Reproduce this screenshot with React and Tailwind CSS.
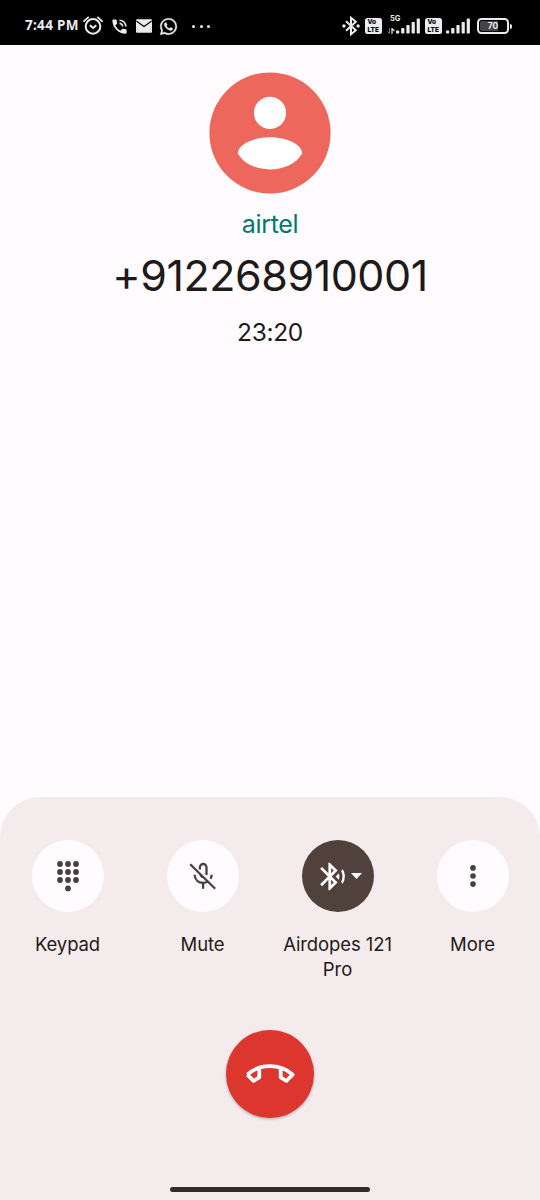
import React from 'react';
import { FaWhatsapp } from 'react-icons/fa';
import { MdBluetoothSearching, MdPhoneInTalk } from 'react-icons/md';

function AlarmIcon() {
    return (
        <svg width="20" height="20" viewBox="0 0 20 20" fill="none" stroke="#ececec" strokeWidth="2" className="ml-[3px]">
            <circle cx="10" cy="10.4" r="7.3" />
            <path d="M1 5.2 5.2 1.4M19 5.2 14.8 1.4" strokeLinecap="round" strokeWidth="1.8" />
            <path d="m6.8 9.2 3.3 2.7 3.2-2.7" strokeWidth="2" />
        </svg>
    );
}

function MailIcon() {
    return (
        <svg width="16" height="14" viewBox="0 0 16 14" className="ml-[7px]">
            <rect x="0" y="0.3" width="16" height="13.4" rx="1" fill="#ececec" />
            <path d="M0.3 2 8 7.6 15.7 2" fill="none" stroke="#000" strokeWidth="1.2" />
        </svg>
    );
}

function BluetoothIcon() {
    return (
        <svg width="18" height="20" viewBox="0 0 18 20" fill="none" stroke="#ececec" strokeWidth="2">
            <path d="m4 5.2 9.8 9L9 18.2V1.8l4.8 4-9.8 9" />
            <circle cx="1.9" cy="10" r="1.7" fill="#ececec" stroke="none" />
            <circle cx="16.1" cy="10" r="1.7" fill="#ececec" stroke="none" />
        </svg>
    );
}

function VoLte() {
    return (
        <div className="h-[16px] w-[17px] rounded-[2.5px] bg-[#ececec] pl-[2.5px] text-[6.5px] leading-[8px] font-extrabold text-black">
            <div>Vo</div>
            <div className="h-[8px]">LTE</div>
        </div>
    );
}

function Signal() {
    return (
        <svg width="24" height="16" viewBox="0 0 24 16" fill="#ececec">
            <rect x="0" y="12.6" width="3.2" height="3" rx="0.8" />
            <rect x="5.2" y="10" width="3.2" height="5.6" rx="0.8" />
            <rect x="10.4" y="7" width="3.2" height="8.6" rx="0.8" />
            <rect x="15.6" y="4" width="3.2" height="11.6" rx="0.8" />
            <rect x="20.7" y="0.6" width="3.2" height="15" rx="0.8" />
        </svg>
    );
}

function StatusBar() {
    return (
        <header className="flex h-[45px] items-center bg-black pt-[7px] pl-[25px] text-[#ececec]">
            <span className="w-[55px] font-['Noto_Sans'] text-[13.5px] leading-none font-bold tracking-[0.3px] whitespace-nowrap">7:44 PM</span>
            <AlarmIcon />
            <MdPhoneInTalk className="ml-[7px] h-[19px] w-[19px]" />
            <MailIcon />
            <FaWhatsapp className="ml-[7px] h-[19px] w-[19px]" stroke="#ececec" strokeWidth="12" />
            <div className="ml-[14px] flex gap-[4.5px]">
                <i className="h-[3px] w-[3px] rounded-full bg-[#ececec]"></i>
                <i className="h-[3px] w-[3px] rounded-full bg-[#ececec]"></i>
                <i className="h-[3px] w-[3px] rounded-full bg-[#ececec]"></i>
            </div>
            <div className="mr-[28px] ml-auto flex items-center">
                <BluetoothIcon />
                <div className="ml-[5px]"><VoLte /></div>
                <div className="relative ml-[14px]">
                    <span className="absolute top-[-3px] left-[-6px] text-[7.5px] leading-none font-bold">5G</span>
                    <svg width="8" height="6" viewBox="0 0 8 6" className="absolute bottom-0 left-[-9px]" fill="none" stroke="#ececec">
                        <path d="M2.5 0v5.5L0.5 3.5" stroke="#777" />
                        <path d="M5 6V0.6l2.4 2.4" strokeWidth="1.2" />
                    </svg>
                    <Signal />
                </div>
                <div className="ml-[5px]"><VoLte /></div>
                <div className="ml-[4px]"><Signal /></div>
                <div className="ml-[7px] flex h-[16px] w-[32px] items-center rounded-[4.5px] border-2 border-[#ececec] p-[1px]">
                    <div className="flex h-full w-[26px] items-center justify-center rounded-[2px] bg-linear-to-r from-[#444] from-70% to-black to-70% text-[8.5px] font-bold">70</div>
                </div>
                <div className="ml-px h-[5px] w-[2px] rounded-r-full bg-[#ececec]"></div>
            </div>
        </header>
    );
}

function KeypadIcon() {
    const dots = [[4, 4], [12, 4], [20, 4], [4, 12], [12, 12], [20, 12], [4, 20], [12, 20], [20, 20], [12, 28.4]];
    return (
        <svg width="24" height="32" viewBox="0 0 24 32" fill="#4b403e">
            {dots.map(([x, y]) => <circle key={`${x}-${y}`} cx={x} cy={y} r="2.9" />)}
        </svg>
    );
}

function MuteIcon() {
    return (
        <svg width="28" height="28" viewBox="0 0 28 28" fill="none" stroke="#4b403e" strokeWidth="2.3">
            <path d="m1.2 2.2 25 24.6" />
            <path d="M10.900 7.500V5.300a3.300 3.300 0 0 1 6.600 0v7.700" />
            <path d="M5.600 12.700c.3 4.800 3.600 8.100 8.600 8.100 1.900 0 3.200-.4 4.400-1.200" />
            <path d="M22.700 12.700c0 1.500-.4 2.900-1.200 4" />
            <path d="M14.100 20.800v6" />
            <path d="M11 11.600c.3 2.300 1.700 3.600 3.800 3.800" strokeWidth="1.8" />
        </svg>
    );
}

function MoreIcon() {
    return (
        <svg width="6" height="24" viewBox="0 0 6 24" fill="#4b403e">
            <circle cx="3" cy="3.9" r="2.8" />
            <circle cx="3" cy="12" r="2.8" />
            <circle cx="3" cy="20.1" r="2.8" />
        </svg>
    );
}

function HeadsetIcon() {
    return (
        <div className="flex w-full items-center pl-[14px] text-white">
            <MdBluetoothSearching className="h-[33px] w-[33px] shrink-0" />
            <svg width="11" height="6" viewBox="0 0 11 6" className="ml-[2px] shrink-0" fill="currentColor">
                <path d="M0 0h11L5.5 6z" />
            </svg>
        </div>
    );
}

function CallButton({ label, active, children }) {
    return (
        <div className="flex flex-col items-center">
            <button className={`flex h-[72px] w-[72px] items-center justify-center rounded-full ${active ? 'bg-[#51413d]' : 'bg-[#fffbff]'}`}>
                {children}
            </button>
            <span className="mt-[19.5px] w-[125px] text-center text-[18.5px] leading-[25px] tracking-[-0.1px] text-[#1f1a1a]">{label}</span>
        </div>
    );
}

function App() {
    return (
        <div className="flex h-[1200px] w-[540px] flex-col overflow-hidden bg-[#fffbff] font-['Inter',sans-serif]">
            <StatusBar />

            <main className="flex flex-1 flex-col items-center pt-[27px]">
                <svg width="122" height="122" viewBox="0 0 122 122">
                    <circle cx="61" cy="61" r="60.6" fill="#ee675c" />
                    <circle cx="61" cy="40.8" r="16.1" fill="#fff" />
                    <path d="M28.8 81.500C28.800 72.500 44 65.200 61 65.200s32.200 7.300 32.200 16.300C87.500 91.600 75 97.400 61 97.400S34.500 91.600 28.800 81.500z" fill="#fff" />
                </svg>
                <p className="mt-[14px] text-[25px] leading-[32px] tracking-[-0.3px] text-[#00796b]">airtel</p>
                <h1 className="mt-[7px] text-[43px] leading-[56px] tracking-[-0.45px] text-[#1f1a1a]">+912268910001</h1>
                <p className="mt-[13px] text-[24.500px] leading-[32px] tracking-[-0.3px] text-[#1f1a1a]">23:20</p>
            </main>

            <footer className="flex h-[403.5px] flex-col items-center rounded-t-[40px] bg-[#f4ecec] pt-[43.5px]">
                <div className="grid h-[146px] w-full grid-cols-4 justify-items-center">
                    <CallButton label="Keypad"><KeypadIcon /></CallButton>
                    <CallButton label="Mute"><MuteIcon /></CallButton>
                    <CallButton label="Airdopes 121 Pro" active><HeadsetIcon /></CallButton>
                    <CallButton label="More"><MoreIcon /></CallButton>
                </div>
                <button className="mt-[43.5px] flex h-[88px] w-[88px] shrink-0 items-center justify-center rounded-full bg-[#dc362e] shadow-[0_1px_3px_rgba(0,0,0,0.3)]">
                    <svg width="50" height="22" viewBox="0 0 50 22" fill="none" stroke="#fff" strokeWidth="3.8" strokeLinejoin="round">
                        <path d="M2.400 11.600C8.500 6 16.500 3.200 25 3.200S41.500 6 47.600 11.600L41.400 18 35.700 14.400V5" />
                        <path d="M2.400 11.600 8.600 18 14.300 14.400V5" />
                    </svg>
                </button>
                <div className="mt-[69px] h-[5px] w-[200px] rounded-full bg-[#302d2d]"></div>
            </footer>
        </div>
    );
}

export default App;
